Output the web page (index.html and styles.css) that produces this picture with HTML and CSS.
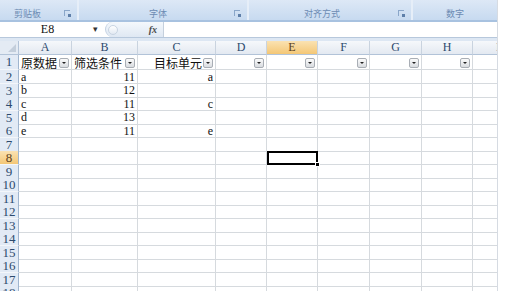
FILE: index.html
```html
<!DOCTYPE html>
<html lang="zh-CN">
<head>
  <meta charset="UTF-8" />
  <title>筛选</title>
  <link rel="stylesheet" href="styles.css">
</head>
<body>
  <div class="app">

    <!-- Ribbon group labels -->
    <div class="ribbon">
      <div class="group g-clip"><span>剪贴板</span><i class="launch"></i></div>
      <div class="group g-font"><span>字体</span><i class="launch"></i></div>
      <div class="group g-align"><span>对齐方式</span><i class="launch"></i></div>
      <div class="group g-num"><span>数字</span></div>
    </div>

    <!-- Formula bar -->
    <div class="formula-bar">
      <div class="name-box">E8</div>
      <div class="name-drop">&#9662;</div>
      <div class="fx-area">
        <span class="knob"></span>
        <span class="fx">fx</span>
      </div>
      <div class="formula-input"></div>
    </div>

    <div class="gap"></div>

    <!-- Sheet -->
    <div class="sheet">
      <div class="row head">
        <div class="corner"></div>
        <div class="ch">A</div><div class="ch">B</div><div class="ch">C</div><div class="ch">D</div>
        <div class="ch active">E</div><div class="ch">F</div><div class="ch">G</div><div class="ch">H</div><div class="ch cut">I</div>
      </div>

      <div class="row first">
        <div class="rh">1</div>
        <div class="c"><span class="t cjk">原数据</span><b class="flt"></b></div>
        <div class="c"><span class="t cjk">筛选条件</span><b class="flt"></b></div>
        <div class="c r"><span class="t cjk">目标单元</span><b class="flt"></b></div>
        <div class="c r"><b class="flt"></b></div>
        <div class="c r"><b class="flt"></b></div>
        <div class="c r"><b class="flt"></b></div>
        <div class="c r"><b class="flt"></b></div>
        <div class="c r"><b class="flt"></b></div>
        <div class="c"></div>
      </div>
      <div class="row">
        <div class="rh">2</div>
        <div class="c">a</div><div class="c r">11</div><div class="c r">a</div>
        <div class="c"></div><div class="c"></div><div class="c"></div><div class="c"></div><div class="c"></div><div class="c"></div>
      </div>
      <div class="row">
        <div class="rh">3</div>
        <div class="c">b</div><div class="c r">12</div><div class="c"></div>
        <div class="c"></div><div class="c"></div><div class="c"></div><div class="c"></div><div class="c"></div><div class="c"></div>
      </div>
      <div class="row">
        <div class="rh">4</div>
        <div class="c">c</div><div class="c r">11</div><div class="c r">c</div>
        <div class="c"></div><div class="c"></div><div class="c"></div><div class="c"></div><div class="c"></div><div class="c"></div>
      </div>
      <div class="row">
        <div class="rh">5</div>
        <div class="c">d</div><div class="c r">13</div><div class="c"></div>
        <div class="c"></div><div class="c"></div><div class="c"></div><div class="c"></div><div class="c"></div><div class="c"></div>
      </div>
      <div class="row">
        <div class="rh">6</div>
        <div class="c">e</div><div class="c r">11</div><div class="c r">e</div>
        <div class="c"></div><div class="c"></div><div class="c"></div><div class="c"></div><div class="c"></div><div class="c"></div>
      </div>
      <div class="row">
        <div class="rh">7</div>
        <div class="c"></div><div class="c"></div><div class="c"></div><div class="c"></div><div class="c"></div><div class="c"></div><div class="c"></div><div class="c"></div><div class="c"></div>
      </div>
      <div class="row">
        <div class="rh active">8</div>
        <div class="c"></div><div class="c"></div><div class="c"></div><div class="c"></div>
        <div class="c selected"><i class="handle"></i></div>
        <div class="c"></div><div class="c"></div><div class="c"></div><div class="c"></div>
      </div>
      <div class="row">
        <div class="rh">9</div>
        <div class="c"></div><div class="c"></div><div class="c"></div><div class="c"></div><div class="c"></div><div class="c"></div><div class="c"></div><div class="c"></div><div class="c"></div>
      </div>
      <div class="row">
        <div class="rh">10</div>
        <div class="c"></div><div class="c"></div><div class="c"></div><div class="c"></div><div class="c"></div><div class="c"></div><div class="c"></div><div class="c"></div><div class="c"></div>
      </div>
      <div class="row">
        <div class="rh">11</div>
        <div class="c"></div><div class="c"></div><div class="c"></div><div class="c"></div><div class="c"></div><div class="c"></div><div class="c"></div><div class="c"></div><div class="c"></div>
      </div>
      <div class="row">
        <div class="rh">12</div>
        <div class="c"></div><div class="c"></div><div class="c"></div><div class="c"></div><div class="c"></div><div class="c"></div><div class="c"></div><div class="c"></div><div class="c"></div>
      </div>
      <div class="row">
        <div class="rh">13</div>
        <div class="c"></div><div class="c"></div><div class="c"></div><div class="c"></div><div class="c"></div><div class="c"></div><div class="c"></div><div class="c"></div><div class="c"></div>
      </div>
      <div class="row">
        <div class="rh">14</div>
        <div class="c"></div><div class="c"></div><div class="c"></div><div class="c"></div><div class="c"></div><div class="c"></div><div class="c"></div><div class="c"></div><div class="c"></div>
      </div>
      <div class="row">
        <div class="rh">15</div>
        <div class="c"></div><div class="c"></div><div class="c"></div><div class="c"></div><div class="c"></div><div class="c"></div><div class="c"></div><div class="c"></div><div class="c"></div>
      </div>
      <div class="row">
        <div class="rh">16</div>
        <div class="c"></div><div class="c"></div><div class="c"></div><div class="c"></div><div class="c"></div><div class="c"></div><div class="c"></div><div class="c"></div><div class="c"></div>
      </div>
      <div class="row">
        <div class="rh">17</div>
        <div class="c"></div><div class="c"></div><div class="c"></div><div class="c"></div><div class="c"></div><div class="c"></div><div class="c"></div><div class="c"></div><div class="c"></div>
      </div>
      <div class="row">
        <div class="rh">18</div>
        <div class="c"></div><div class="c"></div><div class="c"></div><div class="c"></div><div class="c"></div><div class="c"></div><div class="c"></div><div class="c"></div><div class="c"></div>
      </div>
    </div>

  </div>
</body>
</html>
```

FILE: styles.css
```css
* {
  box-sizing: border-box;
}

body {
  margin: 0;
  background-color: #fff;
  font-family: 'Liberation Serif', 'Noto Sans CJK SC', serif;
  font-size: 12px;
  color: #111;
}

.app {
  width: 498px;
  height: 291px;
  border-right: 1px solid #d6dbe2;
  overflow: hidden;
}

/* Ribbon */
.ribbon {
  display: grid;
  grid-template-columns: 79px 170px 164px 1fr;
  height: 22px;
  background: linear-gradient(#dde8f6, #c7daf0);
  border-bottom: 2px solid #a8c2e0;
}

.group {
  display: flex;
  align-items: center;
  justify-content: center;
  position: relative;
  border-right: 2px solid #e6eef8;
  font-family: 'Noto Sans CJK SC', sans-serif;
  font-size: 9px;
  line-height: 10px;
  color: #6c8bb3;
  padding-top: 7px;
}

.g-clip {
  padding-right: 22px;
}

.g-font {
  padding-right: 10px;
}

.g-align {
  padding-right: 16px;
}

.g-num {
  border-right: none;
}

.launch {
  position: absolute;
  right: 7px;
  top: 10px;
  width: 6px;
  height: 6px;
  border-left: 1px solid #8aa6c9;
  border-top: 1px solid #8aa6c9;
}

.launch::after {
  content: "";
  position: absolute;
  right: -1px;
  bottom: -1px;
  width: 3px;
  height: 3px;
  background-color: #5e7fa9;
}

/* Formula bar */
.formula-bar {
  display: flex;
  height: 16px;
  background-color: #fff;
  border-bottom: 1px solid #b7c8dc;
}

.name-box {
  width: 93px;
  text-align: center;
  font-size: 12px;
  line-height: 15px;
  padding-left: 2px;
}

.name-drop {
  width: 12px;
  font-size: 9px;
  line-height: 15px;
  color: #333;
}

.fx-area {
  width: 58px;
  display: flex;
  align-items: center;
  justify-content: space-between;
  padding: 0 6px 0 2px;
  background: linear-gradient(#f4f8fc, #dfe8f3);
  border-radius: 8px 0 0 8px;
  border-left: 1px solid #c3d1e2;
}

.knob {
  width: 10px;
  height: 10px;
  border-radius: 50%;
  border: 1px solid #c8d4e2;
  background: linear-gradient(#fff, #e2e9f2);
}

.fx {
  font-style: italic;
  font-weight: bold;
  font-size: 10px;
  color: #4d4d4d;
}

.formula-input {
  flex: 1;
  border-left: 1px solid #c5d0dd;
}

.gap {
  height: 3px;
  background-color: #dde7f3;
}

/* Sheet */
.sheet {
  height: 250px;
  overflow: hidden;
}

.row {
  display: grid;
  grid-template-columns: 19px 53px 66px 78px 51px 51px 52px 52px 51px 25px;
  height: 13.5px;
}

.row.head {
  height: 14px;
}

.row.first {
  height: 15px;
}

.corner {
  background-color: #e4ebf4;
  border-right: 1px solid #b2c3d8;
  border-bottom: 1px solid #b2c3d8;
  position: relative;
}

.corner::after {
  content: "";
  position: absolute;
  right: 2px;
  bottom: 2px;
  border-left: 8px solid transparent;
  border-bottom: 8px solid #c3cedb;
}

.ch {
  background: linear-gradient(#f6f8fb, #e3e9f1);
  border-right: 1px solid #c9d3df;
  border-bottom: 1px solid #b2c3d8;
  text-align: center;
  font-size: 12px;
  line-height: 13px;
  color: #2d4a6e;
  overflow: hidden;
}

.ch.cut {
  text-align: left;
  padding-left: 23px;
}

.ch.active {
  background: linear-gradient(#fae2b2, #f4c776);
  color: #5a4020;
}

.rh {
  background-color: #e2eaf5;
  border-right: 1px solid #9fb5cf;
  border-bottom: 1px solid #f3f6fa;
  text-align: center;
  font-size: 13px;
  line-height: 13px;
  color: #2d4a6e;
}

.row.first .rh {
  line-height: 14px;
}

.rh.active {
  background: linear-gradient(#fae2b2, #f4c776);
  color: #5a4020;
}

.c {
  display: flex;
  align-items: center;
  padding: 0 2px;
  border-right: 1px solid #d6dade;
  border-bottom: 1px solid #d6dade;
  line-height: 12px;
  white-space: nowrap;
  overflow: hidden;
}

.row.first .c {
  padding-top: 1px;
}

.c.r {
  justify-content: flex-end;
}

.t {
  flex: 1;
}

.c.r .t {
  text-align: right;
}

.cjk {
  font-family: 'Noto Sans CJK SC', sans-serif;
  font-size: 12px;
  line-height: 13px;
}

/* Filter dropdown button */
.flt {
  flex: none;
  width: 10px;
  height: 10px;
  margin-left: 1px;
  border: 1px solid #a9aeb5;
  border-radius: 2px;
  background: linear-gradient(#fbfbfb, #d9dce0);
  position: relative;
}

.flt::after {
  content: "";
  position: absolute;
  left: 2px;
  top: 3px;
  border-left: 2px solid transparent;
  border-right: 2px solid transparent;
  border-top: 2px solid #222;
}

/* Active cell */
.selected {
  border: 2px solid #000;
  position: relative;
  overflow: visible;
}

.handle {
  position: absolute;
  right: -4px;
  bottom: -4px;
  width: 5px;
  height: 5px;
  background-color: #000;
  border: 1px solid #fff;
}
```
